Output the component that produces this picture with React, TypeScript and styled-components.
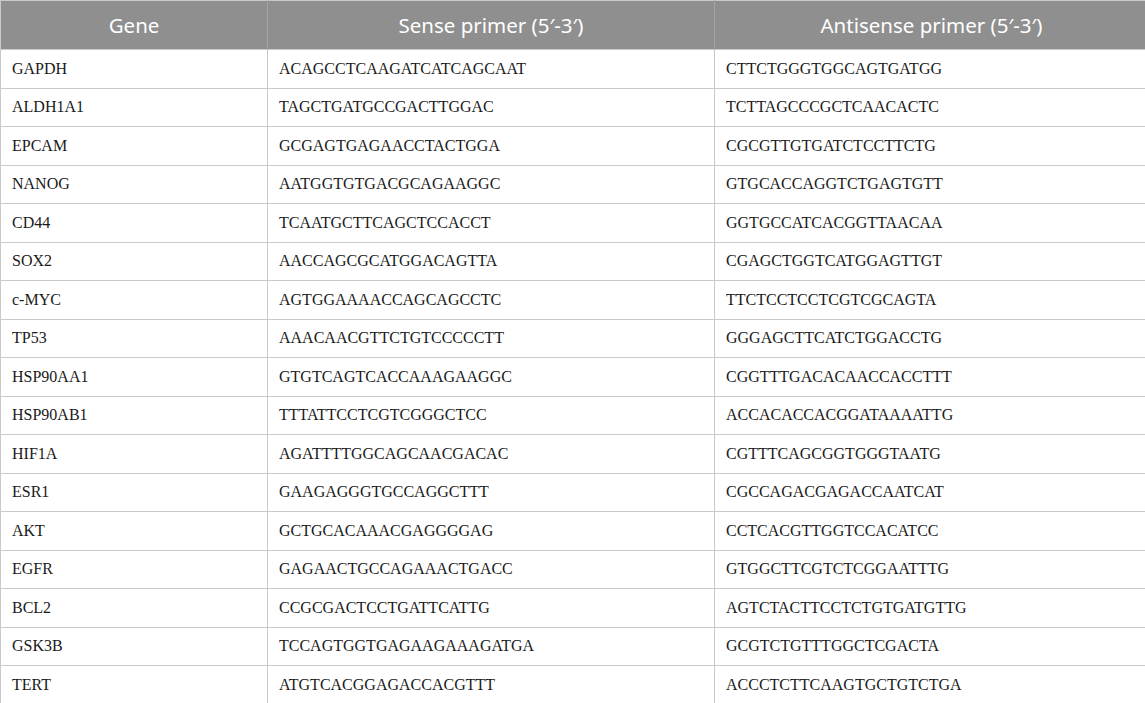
import React from "react";
import styled, { createGlobalStyle } from "styled-components";

const Global = createGlobalStyle`
  html, body { margin: 0; padding: 0; background: #ffffff; }
  body { width: 1145px; height: 703px; overflow: hidden; }
`;

const Table = styled.table`
  width: 1145px;
  border-collapse: collapse;
  table-layout: fixed;
  border: 1px solid #c9c9c9;
`;

const HeadCell = styled.th<{ $w: number }>`
  width: ${(p) => p.$w}px;
  height: 48px;
  padding: 0;
  background: #8f8f8f;
  color: #ffffff;
  font-family: "Noto Sans", "Open Sans", sans-serif;
  font-size: 20.5px;
  font-weight: 400;
  text-align: center;
  border-left: 1px solid #a5a5a5;
  border-right: 1px solid #a5a5a5;
  &:first-child { border-left: none; }
`;

const Row = styled.tr`
  height: 38.53px;
`;

const Cell = styled.td`
  padding: 0 0 0 11px;
  border: 1px solid #c9c9c9;
  font-family: "Liberation Serif", "Times New Roman", serif;
  font-size: 16px;
  color: #1a1a1a;
  text-align: left;
  vertical-align: middle;
  white-space: nowrap;
`;

const rows: [string, string, string][] = [
  ["GAPDH", "ACAGCCTCAAGATCATCAGCAAT", "CTTCTGGGTGGCAGTGATGG"],
  ["ALDH1A1", "TAGCTGATGCCGACTTGGAC", "TCTTAGCCCGCTCAACACTC"],
  ["EPCAM", "GCGAGTGAGAACCTACTGGA", "CGCGTTGTGATCTCCTTCTG"],
  ["NANOG", "AATGGTGTGACGCAGAAGGC", "GTGCACCAGGTCTGAGTGTT"],
  ["CD44", "TCAATGCTTCAGCTCCACCT", "GGTGCCATCACGGTTAACAA"],
  ["SOX2", "AACCAGCGCATGGACAGTTA", "CGAGCTGGTCATGGAGTTGT"],
  ["c-MYC", "AGTGGAAAACCAGCAGCCTC", "TTCTCCTCCTCGTCGCAGTA"],
  ["TP53", "AAACAACGTTCTGTCCCCCTT", "GGGAGCTTCATCTGGACCTG"],
  ["HSP90AA1", "GTGTCAGTCACCAAAGAAGGC", "CGGTTTGACACAACCACCTTT"],
  ["HSP90AB1", "TTTATTCCTCGTCGGGCTCC", "ACCACACCACGGATAAAATTG"],
  ["HIF1A", "AGATTTTGGCAGCAACGACAC", "CGTTTCAGCGGTGGGTAATG"],
  ["ESR1", "GAAGAGGGTGCCAGGCTTT", "CGCCAGACGAGACCAATCAT"],
  ["AKT", "GCTGCACAAACGAGGGGAG", "CCTCACGTTGGTCCACATCC"],
  ["EGFR", "GAGAACTGCCAGAAACTGACC", "GTGGCTTCGTCTCGGAATTTG"],
  ["BCL2", "CCGCGACTCCTGATTCATTG", "AGTCTACTTCCTCTGTGATGTTG"],
  ["GSK3B", "TCCAGTGGTGAGAAGAAAGATGA", "GCGTCTGTTTGGCTCGACTA"],
  ["TERT", "ATGTCACGGAGACCACGTTT", "ACCCTCTTCAAGTGCTGTCTGA"],
];

export default function App() {
  return (
    <>
      <Global />
      <Table>
        <thead>
          <tr>
            <HeadCell $w={266}>Gene</HeadCell>
            <HeadCell $w={446}>Sense primer (5′-3′)</HeadCell>
            <HeadCell $w={433}>Antisense primer (5′-3′)</HeadCell>
          </tr>
        </thead>
        <tbody>
          {rows.map(([g, s, a]) => (
            <Row key={g}>
              <Cell>{g}</Cell>
              <Cell>{s}</Cell>
              <Cell>{a}</Cell>
            </Row>
          ))}
        </tbody>
      </Table>
    </>
  );
}
